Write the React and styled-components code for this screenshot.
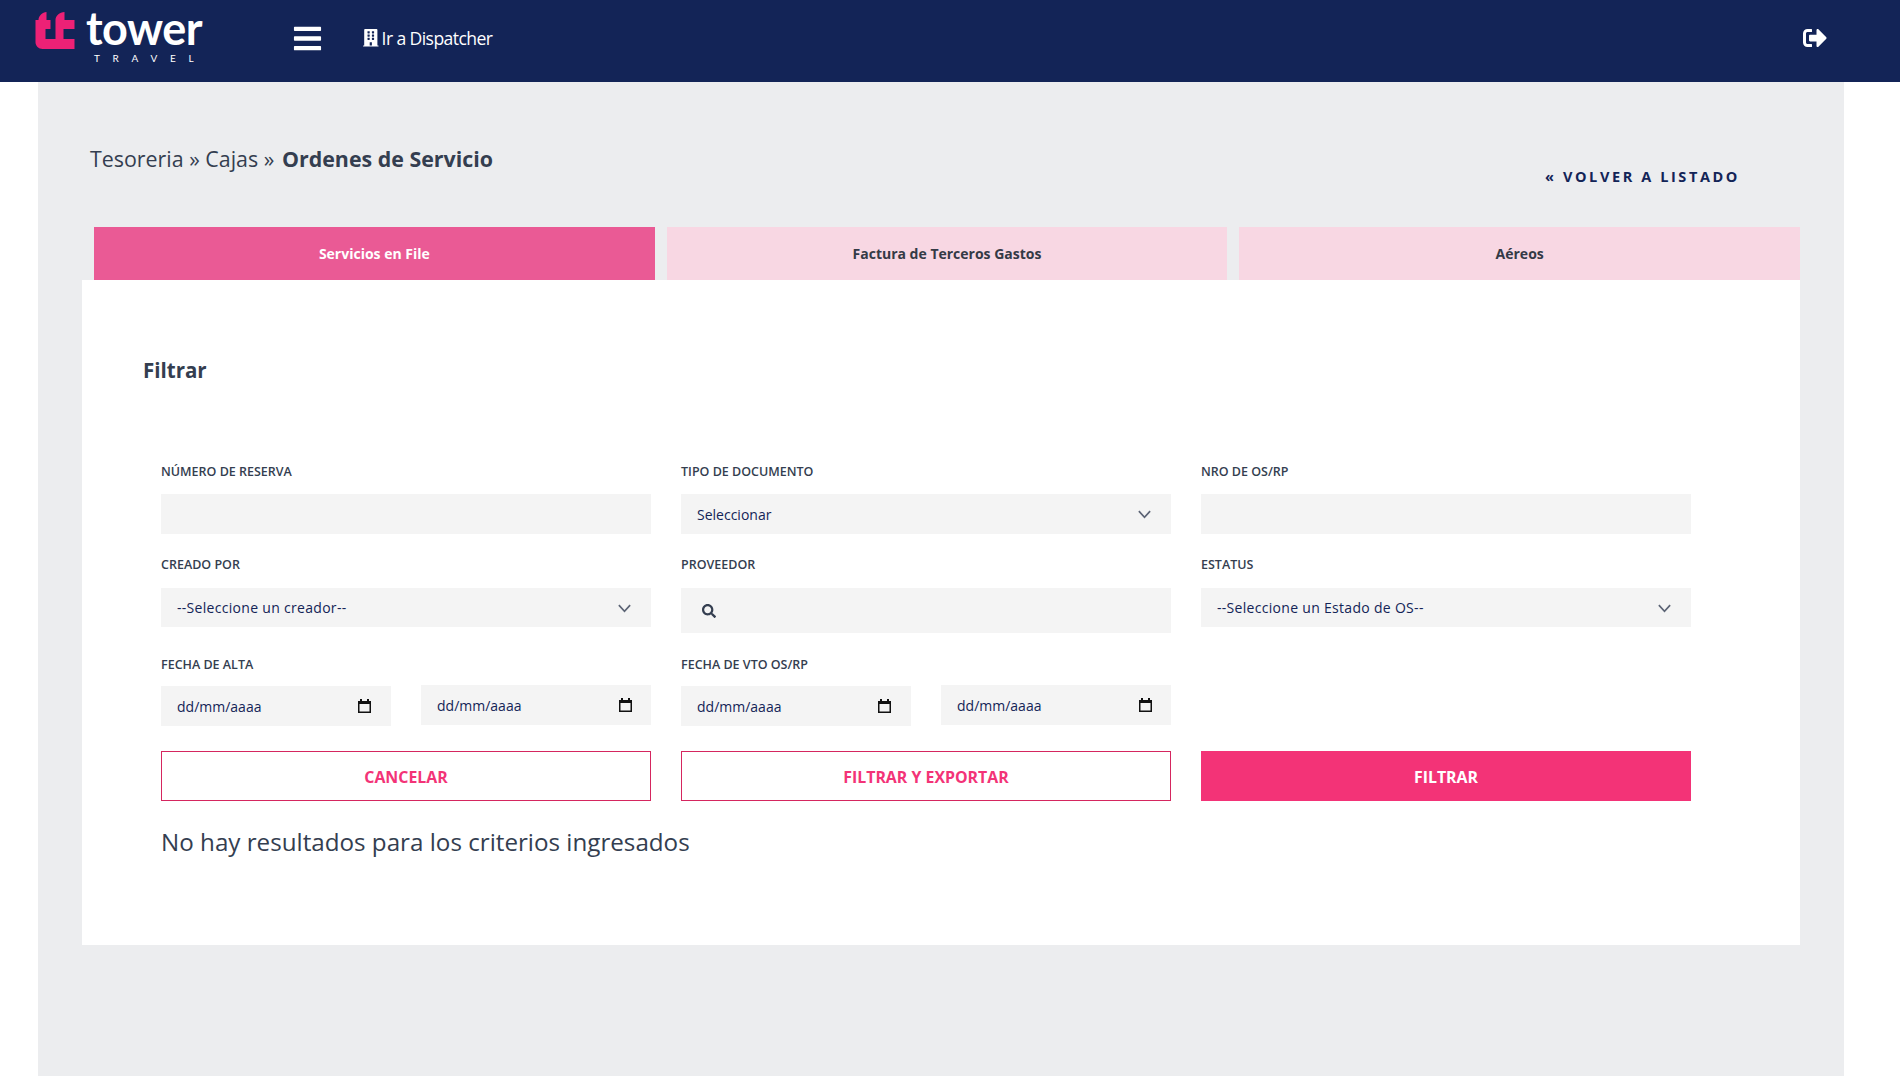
import React from 'react';
import styled, { createGlobalStyle } from 'styled-components';
import { FaBars, FaBuilding, FaSignOutAlt, FaSearch } from 'react-icons/fa';

const GlobalStyle = createGlobalStyle`
  html, body {
    margin: 0;
    padding: 0;
    background: #fff;
  }
  * {
    box-sizing: border-box;
  }
`;

const Page = styled.div`
  width: 1900px;
  height: 1076px;
  overflow: hidden;
  font-family: 'Open Sans', 'Noto Sans', sans-serif;
  color: #343e50;
`;

const Header = styled.header`
  display: flex;
  align-items: center;
  height: 82px;
  padding: 0 73px 6px 35px;
  background: #132457;
  color: #fff;
`;

const Logo = styled.div`
  display: flex;
  gap: 11px;
  width: 257px;
  height: 64px;
  margin-top: -2px;
`;

const LogoMark = styled.svg`
  width: 40px;
  height: 38px;
  margin-top: 7px;
`;

const LogoWords = styled.div`
  display: flex;
  flex-direction: column;
  align-items: flex-start;
`;

const LogoName = styled.span`
  font-family: 'Lato', sans-serif;
  font-size: 45px;
  font-weight: 700;
  line-height: 46px;
  letter-spacing: -0.5px;
`;

const LogoTag = styled.span`
  margin: 1px 0 0 8px;
  font-family: 'Lato', sans-serif;
  font-size: 10px;
  line-height: 12px;
  letter-spacing: 12.7px;
`;

const MenuButton = styled.div`
  display: flex;
  width: 70px;
  font-size: 31px;
`;

const DispatcherLink = styled.a`
  display: flex;
  align-items: center;
  gap: 2px;
  font-size: 17.6px;
  letter-spacing: -0.6px;
`;

const LogoutLink = styled.a`
  display: flex;
  margin-left: auto;
  font-size: 24px;
`;

const Content = styled.main`
  height: 994px;
  margin: 0 56px 0 38px;
  padding: 0 44px;
  background: #ecedef;
`;

const TitleRow = styled.div`
  position: relative;
  height: 145px;
  padding: 62px 0 0 8px;
`;

const Breadcrumb = styled.h1`
  margin: 0;
  font-size: 21.4px;
  font-weight: 400;
  line-height: 30px;

  strong {
    margin-left: 2px;
  }
`;

const BackLink = styled.a`
  position: absolute;
  top: 85px;
  right: 60px;
  font-size: 14.5px;
  font-weight: 700;
  line-height: 20px;
  letter-spacing: 2.6px;
  color: #132457;
`;

const Tabs = styled.nav`
  display: flex;
  gap: 12px;
  padding-left: 12px;
`;

const Tab = styled.div`
  flex: 1;
  height: 53px;
  display: flex;
  align-items: center;
  justify-content: center;
  font-size: 14px;
  font-weight: 700;
  background: ${p => (p.$active ? '#ea5a95' : '#f8d7e3')};
  color: ${p => (p.$active ? '#fff' : '#343a46')};
`;

const Card = styled.section`
  height: 665px;
  padding: 72px 79px 0;
  background: #fff;
`;

const CardTitle = styled.h2`
  margin: 0 0 0 -18px;
  font-size: 20.5px;
  font-weight: 700;
  line-height: 36px;
`;

const FilterGrid = styled.div`
  display: grid;
  grid-template-columns: repeat(3, 490px);
  column-gap: 30px;
  margin-top: 75px;
`;

const Field = styled.div`
  display: flex;
  flex-direction: column;
  height: ${p => p.$height}px;
`;

const Label = styled.label`
  padding-top: 1px;
  font-size: 12.5px;
  font-weight: 600;
  line-height: 16px;
  margin-bottom: ${p => p.$gap || 14}px;
  text-transform: uppercase;
`;

const Input = styled.input`
  width: 100%;
  height: 40px;
  border: 0;
  outline: 0;
  background: #f4f4f4;
`;

const SelectBox = styled.div`
  position: relative;
  height: ${p => p.$height || 39}px;
  background: #f4f4f4;
`;

const Select = styled.select`
  appearance: none;
  width: 100%;
  height: 100%;
  padding: 0 16px;
  border: 0;
  outline: 0;
  background: transparent;
  font-family: inherit;
  font-size: 14px;
  letter-spacing: ${p => (p.$spaced ? '0.3px' : '0')};
  color: #132457;
`;

const Chevron = styled.svg`
  position: absolute;
  top: 50%;
  right: 19px;
  width: 15px;
  height: 15px;
  transform: translateY(-50%);
  pointer-events: none;
`;

const SearchBox = styled.div`
  display: flex;
  align-items: center;
  height: 45px;
  padding: 1px 0 0 21px;
  background: #f4f4f4;
  font-size: 14px;
  color: #343e50;
`;

const DateRow = styled.div`
  display: grid;
  grid-template-columns: 230px 230px;
  column-gap: 30px;
`;

const DateBox = styled.div`
  display: flex;
  align-items: center;
  justify-content: space-between;
  height: 40px;
  margin-top: ${p => (p.$raised ? -1 : 0)}px;
  padding: 0 ${p => (p.$raised ? 19 : 20)}px 0 16px;
  background: #f4f4f4;
  font-size: 14px;
  color: #132457;
`;

const Calendar = styled.svg`
  width: 13px;
  height: 14px;
`;

const Actions = styled.div`
  display: grid;
  grid-template-columns: repeat(3, 490px);
  column-gap: 30px;
  margin-top: 25px;
`;

const ActionButton = styled.button`
  height: 50px;
  border: 1px solid ${p => (p.$primary ? '#f33377' : '#d5265f')};
  background: ${p => (p.$primary ? '#f33377' : '#fff')};
  color: ${p => (p.$primary ? '#fff' : '#f33377')};
  font-family: inherit;
  font-size: 15.9px;
  font-weight: 700;
  padding-top: 2px;
`;

const EmptyMessage = styled.p`
  margin: 23px 0 0;
  font-size: 24.2px;
  line-height: 36px;
`;

const ChevronDown = () => (
  <Chevron viewBox="0 0 16 16" fill="none" stroke="#5c6475" strokeWidth="1.8">
    <path d="M2 5l6 6.5L14 5" />
  </Chevron>
);

const CalendarIcon = () => (
  <Calendar viewBox="0 0 13 14">
    <path fill="#111" d="M2 0h2v2h5V0h2v2h2v12H0V2h2z" />
    <rect x="1.5" y="5" width="10" height="7.5" fill="#f4f4f4" />
  </Calendar>
);

const DateField = ({ raised }) => (
  <DateBox $raised={raised}>
    dd/mm/aaaa
    <CalendarIcon />
  </DateBox>
);

const App = () => (
  <Page>
    <GlobalStyle />
    <Header>
      <Logo>
        <LogoMark viewBox="0 0 39 38">
          <g fill="#ed2176">
            <path d="M11 0v8H3c0-4 4-8 8-8zM29 0v8h-9c0-4 4-8 9-8z" />
            <path d="M0 8h15v9H0zM20 8h19v9H20zM0 17h10v10H0zM20 17h8v10h-8z" />
            <path d="M0 27h39v10H7c-4 0-7-3-7-7z" />
          </g>
        </LogoMark>
        <LogoWords>
          <LogoName>tower</LogoName>
          <LogoTag>TRAVEL</LogoTag>
        </LogoWords>
      </Logo>
      <MenuButton>
        <FaBars />
      </MenuButton>
      <DispatcherLink>
        <FaBuilding />
        Ir a Dispatcher
      </DispatcherLink>
      <LogoutLink>
        <FaSignOutAlt />
      </LogoutLink>
    </Header>
    <Content>
      <TitleRow>
        <Breadcrumb>
          Tesoreria » Cajas » <strong>Ordenes de Servicio</strong>
        </Breadcrumb>
        <BackLink>« VOLVER A LISTADO</BackLink>
      </TitleRow>
      <Tabs>
        <Tab $active>Servicios en File</Tab>
        <Tab>Factura de Terceros Gastos</Tab>
        <Tab>Aéreos</Tab>
      </Tabs>
      <Card>
        <CardTitle>Filtrar</CardTitle>
        <FilterGrid>
          <Field $height={93}>
            <Label>Número de reserva</Label>
            <Input />
          </Field>
          <Field $height={93}>
            <Label>Tipo de documento</Label>
            <SelectBox $height={40}>
              <Select defaultValue="">
                <option value="">Seleccionar</option>
              </Select>
              <ChevronDown />
            </SelectBox>
          </Field>
          <Field $height={93}>
            <Label>Nro de OS/RP</Label>
            <Input />
          </Field>
          <Field $height={100}>
            <Label $gap={15}>Creado por</Label>
            <SelectBox>
              <Select $spaced defaultValue="">
                <option value="">--Seleccione un creador--</option>
              </Select>
              <ChevronDown />
            </SelectBox>
          </Field>
          <Field $height={100}>
            <Label $gap={15}>Proveedor</Label>
            <SearchBox>
              <FaSearch />
            </SearchBox>
          </Field>
          <Field $height={100}>
            <Label $gap={15}>Estatus</Label>
            <SelectBox>
              <Select $spaced defaultValue="">
                <option value="">--Seleccione un Estado de OS--</option>
              </Select>
              <ChevronDown />
            </SelectBox>
          </Field>
          <Field $height={70}>
            <Label $gap={13}>Fecha de alta</Label>
            <DateRow>
              <DateField />
              <DateField raised />
            </DateRow>
          </Field>
          <Field $height={70}>
            <Label $gap={13}>Fecha de vto OS/RP</Label>
            <DateRow>
              <DateField />
              <DateField raised />
            </DateRow>
          </Field>
        </FilterGrid>
        <Actions>
          <ActionButton>CANCELAR</ActionButton>
          <ActionButton>FILTRAR Y EXPORTAR</ActionButton>
          <ActionButton $primary>FILTRAR</ActionButton>
        </Actions>
        <EmptyMessage>No hay resultados para los criterios ingresados</EmptyMessage>
      </Card>
    </Content>
  </Page>
);

export default App;
